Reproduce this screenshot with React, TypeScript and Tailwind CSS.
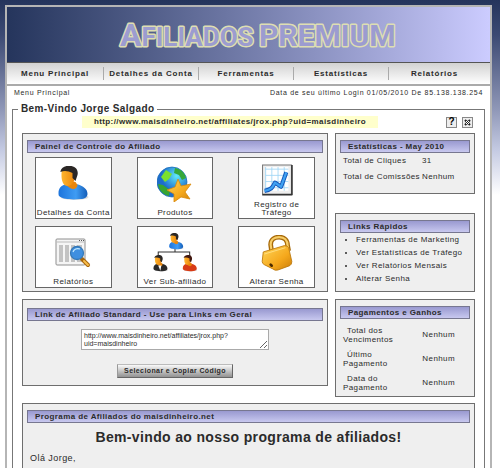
import React from 'react'
import type { ReactNode } from 'react'

const navItems = ['Menu Principal', 'Detalhes da Conta', 'Ferramentas', 'Estatísticas', 'Relatórios']
const quickLinks = ['Ferramentas de Marketing', 'Ver Estatísticas de Tráfego', 'Ver Relatórios Mensais', 'Alterar Senha']
const payments = [
  ['Total dos', 'Vencimentos'],
  ['Último', 'Pagamento'],
  ['Data do', 'Pagamento'],
]

const Person = ({ hair, shirt }: { hair: string; shirt: string }) => (
  <g>
    <ellipse cx="17" cy="31" rx="14" ry="3" fill="#999" opacity=".35" />
    <path d="M1 27C1 22 4 19 9 18L19 18C26 20 30 23 30 28C30 31 27 33 23 33C14 34 6 33 3 31C1 30 1 29 1 27Z" fill={shirt} />
    <path d="M9 14L18 16L20 19C19 25 13 24 8 18Z" fill="#e8860c" />
    <path d="M4 7C5 2 9 0 13 1C17 2 19 5 18 10C17 16 14 20 10 20C6 20 4 15 4 10Z" fill="url(#skin)" />
    <path d="M3 5C4 1 9-1 14 0C19 1 21 5 20 9L18 15L15 12L15 7C11 5 7 4 3 6Z" fill={hair} />
  </g>
)

const AccountIcon = () => (
  <svg viewBox="0 0 31 36" className="h-9 w-8">
    <Person hair="#2b2725" shirt="url(#blue)" />
  </svg>
)

const ProductsIcon = () => (
  <svg viewBox="0 0 36 36" className="h-9 w-9">
    <circle cx="15" cy="16" r="15" fill="url(#globe)" stroke="#1467b5" strokeWidth=".7" />
    <path d="M4 11L9 4L15 8L12 13L8 16Z" fill="#7be02f" />
    <path d="M18 2C24 3 28 7 29 12L25 14L22 9L17 7Z" fill="#35a83a" />
    <path d="M1 18L6 19L13 24L12 30C5 28 2 24 1 18Z" fill="#37a432" />
    <path d="M21 13L24 20L34 18L28 26L33 33L24 31L17 36L17 28L10 24L18 21Z" fill="url(#gold)" stroke="#d9890a" strokeWidth=".8" strokeLinejoin="round" />
  </svg>
)

const TrafficIcon = () => (
  <svg viewBox="0 0 30 31" className="h-8 w-8">
    <path d="M1 1H29V30H1Z" fill="#eee" stroke="#777" />
    <path d="M1 29.500H29.500V1" fill="none" stroke="#333" strokeWidth="1.500" />
    <path d="M4 3H26V26H4Z" fill="#fff" />
    <path d="M4 3V26M10 3V26M16 3V26M22 3V26M4 5H26M4 11H26M4 17H26M4 23H26" stroke="#9bd4f5" strokeWidth=".8" />
    <path d="M3 26C10 25 11 22 13 18L19 22L24 8" fill="none" stroke="#1456b8" strokeWidth="4" strokeLinejoin="round" />
    <path d="M3 26C10 25 11 22 13 18L19 22L24 8" fill="none" stroke="#3fa2f2" strokeWidth="2.200" strokeLinejoin="round" />
  </svg>
)

const ReportsIcon = () => (
  <svg viewBox="0 0 36 30" className="h-8 w-9">
    <rect x="1" y="1" width="29" height="26" rx="1" fill="#f5f5f5" stroke="#8f8f8f" />
    <path d="M1.500 4H29.500" stroke="#bbb" />
    <path d="M24 2.500H25M26 2.500H27M28 2.500H29" stroke="#555" />
    <path d="M4 7H8V24H4ZM10 7H14V24H10ZM16 7H20V24H16ZM22 7H27V24H22Z" fill="#c3c3c3" />
    <path d="M27 21L33 27" stroke="#a8660b" strokeWidth="4" strokeLinecap="round" />
    <path d="M29 23L33 27" stroke="#f7bd4b" strokeWidth="2" strokeLinecap="round" />
    <circle cx="22" cy="15" r="6.500" fill="#3f8fe0" stroke="#3679b7" strokeWidth="1.300" />
    <path d="M18 14C19 11 22 10 25 11" fill="none" stroke="#c7ecff" strokeWidth="1.200" />
  </svg>
)

const SubAffiliateIcon = () => (
  <svg viewBox="0 0 42 38" className="h-10 w-11">
    <path d="M21 14V18M5 22V18H35V22" fill="none" stroke="#333" />
    <g transform="translate(15 0) scale(.46)"><Person hair="#2b2725" shirt="url(#blue)" /></g>
    <g transform="translate(0 21) scale(.46)"><Person hair="#2b2725" shirt="#292929" /></g>
    <path d="M5 31L8 31L7 36Z" fill="#fff" />
    <g transform="translate(28 21) scale(.46)"><Person hair="#42170f" shirt="#d83b16" /></g>
  </svg>
)

const PasswordIcon = () => (
  <svg viewBox="0 0 30 34" className="h-9 w-8">
    <path d="M10 16L9 9C9 4 13 2 17 2C22 2 25 5 25 10L26 15" fill="none" stroke="#a86a0a" strokeWidth="4.500" />
    <path d="M10 16L9 9C9 4 13 2 17 2C22 2 25 5 25 10L26 15" fill="none" stroke="#f8ce67" strokeWidth="2" />
    <path d="M2 16L22 10Q25 10 26 12L29 25Q29 28 27 29L16 33Q13 34 11 32L3 28Q1 27 1 25Z" fill="url(#gold)" stroke="#b97508" strokeWidth=".8" />
    <path d="M3 18L23 12" fill="none" stroke="#ffe28a" strokeWidth=".8" />
    <path d="M9 28L10 29" stroke="#4d2c00" strokeWidth="2.500" strokeLinecap="round" />
  </svg>
)

const tiles = [
  { label: 'Detalhes da Conta', icon: <AccountIcon /> },
  { label: 'Produtos', icon: <ProductsIcon /> },
  { label: 'Registro de Tráfego', icon: <TrafficIcon /> },
  { label: 'Relatórios', icon: <ReportsIcon /> },
  { label: 'Ver Sub-afiliado', icon: <SubAffiliateIcon /> },
  { label: 'Alterar Senha', icon: <PasswordIcon /> },
]

// shared gradients for the tile icons
const IconDefs = () => (
  <svg className="absolute h-0 w-0">
    <defs>
      <linearGradient id="skin"><stop offset="0" stopColor="#ffb52e" /><stop offset="1" stopColor="#ea8309" /></linearGradient>
      <linearGradient id="blue"><stop offset="0" stopColor="#1d74dc" /><stop offset=".6" stopColor="#3f9cf3" /><stop offset="1" stopColor="#145db8" /></linearGradient>
      <linearGradient id="gold" x2="1" y2="1"><stop offset="0" stopColor="#ffd65a" /><stop offset=".6" stopColor="#f5a81c" /><stop offset="1" stopColor="#c97c08" /></linearGradient>
      <radialGradient id="globe" cx=".65" cy=".3"><stop offset="0" stopColor="#62eafa" /><stop offset="1" stopColor="#1d6dcc" /></radialGradient>
    </defs>
  </svg>
)

const Panel = ({ title, className = 'pt-[6px]', children }: { title: string; className?: string; children?: ReactNode }) => (
  <section className={`border border-[#6e6e6e] bg-[#efefef] px-1 ${className}`}>
    <h2 className="border border-[#777790] bg-linear-to-b from-[#9999d0] to-[#c8c8ef] px-[7px] text-[8px] leading-[11px] font-bold">{title}</h2>
    {children}
  </section>
)

export default function App() {
  return (
    <div className="flex h-screen flex-col overflow-hidden bg-[linear-gradient(#24345c_0px,#3c4a73_35px,#9098b8_110px,#c4cae2_150px,#fff_195px)] px-[5px] pt-[5px] font-['Liberation_Sans',Arial,sans-serif] text-[8px] leading-[10px] tracking-wider text-[#2b2b2b]">
      <IconDefs />
      <div className="mr-[3px] flex flex-1 flex-col border-2 border-b-0 border-[#b5b5b5] bg-white">
        <header>
          <div className="flex h-[55px] items-center justify-center bg-linear-to-r from-[#25355c] to-[#ccccff] font-['Roboto','Liberation_Sans',sans-serif] font-bold tracking-normal">
            <svg viewBox="0 0 300 50" className="h-[50px] w-[300px]" role="img" aria-label="Afiliados Premium">
              <g fill="#9c9cd0" stroke="#dedeb2" strokeWidth="3" strokeLinejoin="round" paintOrder="stroke">
                <text x="21" y="36" fontSize="26"><tspan fontSize="32">A</tspan>FILIADOS</text>
                <text x="160" y="36" fontSize="30">PREMIUM</text>
              </g>
            </svg>
          </div>
          <nav className="grid grid-cols-[97fr_95fr_95fr_95fr_91fr] border-t border-b-2 border-t-[#555] border-b-[#aaa] bg-linear-to-b from-[#d2d2d2] to-white py-1 pr-[10px] text-center font-bold tracking-widest">
            {navItems.map((item) => (
              <a key={item} href="#" className="border-r border-[#aaa] leading-[13px] whitespace-nowrap last:border-r-0">{item}</a>
            ))}
          </nav>
        </header>

        <div className="flex justify-between px-[7px] pt-[2px] text-[7px] tracking-widest">
          <a href="#">Menu Principal</a>
          <p>Data de seu último Login 01/05/2010 De 85.138.138.254</p>
        </div>

        <fieldset className="mx-[5px] mt-1 flex flex-1 flex-col border border-b-0 border-[#777] px-[9px]">
          <legend className="-ml-1 px-[3px] text-[10px] leading-[14px] font-bold">Bem-Vindo Jorge Salgado</legend>
          <div className="flex items-center pr-[2px]">
            <div className="flex-1 pr-2 text-center">
              <a href="#" className="inline-block bg-[#ffffcc] px-3 leading-3 font-bold">http://www.maisdinheiro.net/affiliates/jrox.php?uid=maisdinheiro</a>
            </div>
            <div className="flex gap-[5px]">
              <button aria-label="Ajuda" className="flex size-[11px] items-center justify-center border border-[#888] bg-[#eee] text-[10px] font-bold tracking-normal text-black">?</button>
              <button aria-label="Sair" className="flex size-[11px] items-center justify-center border border-[#888] bg-[#eee]">
                <svg viewBox="0 0 7 7" className="size-[7px]"><path d="M1 1L6 6M6 1L1 6" stroke="#222" strokeWidth="2" /><path d="M2 2L5 5M5 2L2 5" stroke="#fff" strokeWidth="1" /></svg>
              </button>
            </div>
          </div>

          <div className="mt-[5px] grid grid-cols-[306fr_140fr] items-start gap-[7px]">
            <Panel title="Painel de Controle do Afiliado" className="pt-[6px] pb-[3px]">
              <div className="grid grid-cols-3 gap-x-[25px] gap-y-[7px] px-2 pt-1">
                {tiles.map((tile) => (
                  <a key={tile.label} href="#" className="flex h-[62px] flex-col items-center border border-[#666] bg-white pb-px text-center">
                    <span className="flex flex-1 items-center">{tile.icon}</span>
                    <span className="leading-[8px]">{tile.label}</span>
                  </a>
                ))}
              </div>
            </Panel>
            <div className="flex flex-col justify-between self-stretch">
              <Panel title="Estatísticas - May 2010" className="pt-[6px] pb-[11px]">
                <table className="ml-[3px]">
                  <tbody>
                    <tr><td className="pt-[3px] pr-[2px]">Total de Cliques</td><td className="pt-[3px]">31</td></tr>
                    <tr><td className="pt-[6px] pr-[2px]">Total de Comissões</td><td className="pt-[6px]">Nenhum</td></tr>
                  </tbody>
                </table>
              </Panel>
              <Panel title="Links Rápidos" className="pt-[6px] pb-[6px]">
                <ul className="list-disc pl-4 leading-[13px] whitespace-nowrap">
                  {quickLinks.map((link) => <li key={link}><a href="#">{link}</a></li>)}
                </ul>
              </Panel>
            </div>

            <Panel title="Link de Afiliado Standard - Use para Links em Geral" className="pt-2 pb-[7px]">
              <div className="flex flex-col items-center gap-[14px] pt-2">
                <textarea aria-label="Link de Afiliado" defaultValue={'http://www.maisdinheiro.net/affiliates/jrox.php?\nuid=maisdinheiro'} className="h-[21px] w-[188px] border border-[#aaa] bg-white px-[2px] pt-[2px] text-[7px] leading-[8px] tracking-normal" />
                <button className="border border-[#666] border-t-[#bbb] border-l-[#999] bg-linear-to-b from-[#fafafa] to-[#929292] px-[6px] text-[7px] leading-3 font-bold">Selecionar e Copiar Código</button>
              </div>
            </Panel>
            <Panel title="Pagamentos e Ganhos" className="pt-[6px] pb-px">
              <table className="mt-1 ml-[3px] w-[112px]">
                <tbody>
                  {payments.map(([first, second]) => (
                    <tr key={first}>
                      <td className="py-[3px] leading-[9px]"><span className="pl-1">{first}</span><br />{second}</td>
                      <td className="text-right">Nenhum</td>
                    </tr>
                  ))}
                </tbody>
              </table>
            </Panel>
          </div>

          <Panel title="Programa de Afiliados do maisdinheiro.net" className="mt-[6px] flex-1 border-b-0 pt-[6px]">
            <h1 className="pt-[6px] text-center text-[14px] leading-4 font-bold tracking-wide">Bem-vindo ao nosso programa de afiliados!</h1>
            <p className="pt-2 pl-[3px] text-[9px] tracking-wider">Olá Jorge,</p>
          </Panel>
        </fieldset>
      </div>
    </div>
  )
}
